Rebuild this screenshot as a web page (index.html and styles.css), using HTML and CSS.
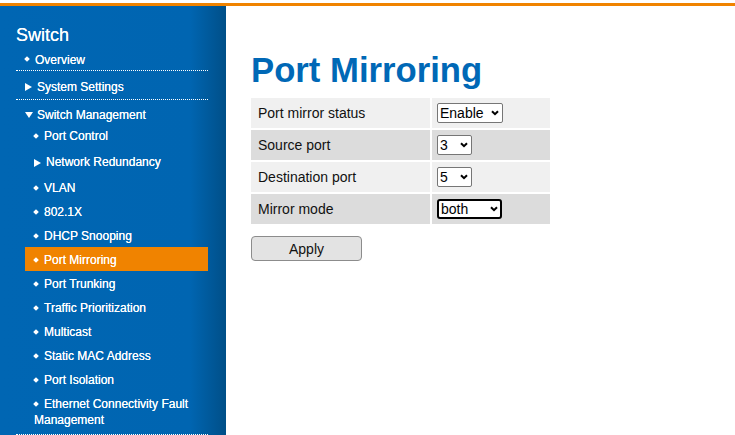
FILE: index.html
```html
<!DOCTYPE html>
<html>
<head>
<meta charset="utf-8">
<title>Port Mirroring</title>
<link rel="stylesheet" href="styles.css">
</head>
<body>
<div class="topbar"></div>
<div class="layout">
  <nav class="sidebar">
    <div class="brand">Switch</div>
    <ul class="menu">
      <li class="item"><div class="row r-overview"><span class="dot"></span>Overview</div></li>
      <li class="item"><div class="row r-system"><span class="tri-r"></span>System Settings</div></li>
      <li class="item">
        <div class="row r-mgmt"><span class="tri-d"></span>Switch Management</div>
        <ul class="sub">
          <li class="sub-item"><span class="dot"></span>Port Control</li>
          <li class="sub-item nr"><span class="tri-r"></span>Network Redundancy</li>
          <li class="sub-item"><span class="dot"></span>VLAN</li>
          <li class="sub-item"><span class="dot"></span>802.1X</li>
          <li class="sub-item"><span class="dot"></span>DHCP Snooping</li>
          <li class="sub-item active"><span class="dot"></span>Port Mirroring</li>
          <li class="sub-item"><span class="dot"></span>Port Trunking</li>
          <li class="sub-item"><span class="dot"></span>Traffic Prioritization</li>
          <li class="sub-item"><span class="dot"></span>Multicast</li>
          <li class="sub-item"><span class="dot"></span>Static MAC Address</li>
          <li class="sub-item"><span class="dot"></span>Port Isolation</li>
          <li class="sub-item"><span class="dot"></span>Ethernet Connectivity Fault Management</li>
        </ul>
      </li>
    </ul>
  </nav>
  <main class="content">
    <h1 class="title">Port Mirroring</h1>
    <table class="form">
      <tr class="light">
        <td class="label">Port mirror status</td>
        <td class="val"><span class="sel w-enable"><select><option>Enable</option><option>Disable</option></select><svg class="chev" width="8" height="6" viewBox="0 0 8 6"><path d="M1 1.2L4 4.2L7 1.2" fill="none" stroke="#000" stroke-width="2"/></svg></span></td>
      </tr>
      <tr class="dark">
        <td class="label">Source port</td>
        <td class="val"><span class="sel w-num"><select><option>3</option></select><svg class="chev" width="8" height="6" viewBox="0 0 8 6"><path d="M1 1.2L4 4.2L7 1.2" fill="none" stroke="#000" stroke-width="2"/></svg></span></td>
      </tr>
      <tr class="light">
        <td class="label">Destination port</td>
        <td class="val"><span class="sel w-num"><select><option>5</option></select><svg class="chev" width="8" height="6" viewBox="0 0 8 6"><path d="M1 1.2L4 4.2L7 1.2" fill="none" stroke="#000" stroke-width="2"/></svg></span></td>
      </tr>
      <tr class="dark">
        <td class="label">Mirror mode</td>
        <td class="val"><span class="sel w-mode"><select class="focused"><option>both</option></select><svg class="chev" width="8" height="6" viewBox="0 0 8 6"><path d="M1 1.2L4 4.2L7 1.2" fill="none" stroke="#000" stroke-width="2"/></svg></span></td>
      </tr>
    </table>
    <button class="apply">Apply</button>
  </main>
</div>
</body>
</html>
```

FILE: styles.css
```css
html, body {
  margin: 0;
  padding: 0;
  background: #fff;
}
body {
  font-family: "Liberation Sans", Arial, sans-serif;
  overflow: hidden;
}
.topbar {
  margin-top: 3px;
  height: 3px;
  background: #f08300;
}
.layout {
  display: flex;
  align-items: flex-start;
}
.sidebar {
  width: 226px;
  min-height: 440px;
  box-sizing: border-box;
  padding-top: 18px;
  color: #fff;
  background: linear-gradient(to right, #0066b3 0, #0065b1 190px, #004f88 226px);
}
.brand {
  padding-left: 16px;
  font-size: 18px;
  line-height: 22px;
  margin-bottom: 1px;
  text-shadow: 0 0 0.4px #fff;
}
.menu {
  list-style: none;
  margin: 0 18px 0 16px;
  padding: 0;
}
.item {
  border-bottom: 1px dotted #fff;
  font-size: 12px;
  line-height: 16px;
  text-shadow: 0 0 0.4px #fff;
}
.row {
  display: flex;
  align-items: center;
  padding-left: 9px;
}
.r-overview { padding-top: 5px; padding-bottom: 2px; }
.r-system { padding-top: 8px; padding-bottom: 4px; }
.r-mgmt { padding-top: 7px; padding-bottom: 0; }
.sub {
  list-style: none;
  margin: 0 0 0 9px;
  padding: 0 0 3px 0;
}
.sub-item {
  padding: 5px 0 3px 9px;
}
.sub-item.nr {
  padding-top: 7px;
  padding-bottom: 5px;
}
.sub-item.active {
  background: #f08300;
}
.dot {
  display: inline-block;
  width: 4px;
  height: 4px;
  background: #fff;
  transform: rotate(45deg);
  margin-right: 6px;
  vertical-align: middle;
  position: relative;
  top: -1px;
}
.tri-r {
  display: inline-block;
  width: 0;
  height: 0;
  border-left: 7px solid #fff;
  border-top: 4px solid transparent;
  border-bottom: 4px solid transparent;
  margin-right: 5px;
  vertical-align: middle;
}
.tri-d {
  display: inline-block;
  width: 0;
  height: 0;
  border-top: 6px solid #fff;
  border-left: 4px solid transparent;
  border-right: 4px solid transparent;
  margin-right: 4px;
}
.content {
  padding-left: 25px;
}
.title {
  margin: 44px 0 0 0;
  font-size: 34.7px;
  line-height: 40px;
  font-weight: bold;
  color: #0068b6;
}
.form {
  border-collapse: separate;
  border-spacing: 2px;
  margin: 6px 0 0 -2px;
  font-size: 14px;
  color: #111;
}
.form td {
  height: 30px;
  padding: 0;
  box-sizing: border-box;
}
.form .label {
  width: 179px;
  padding-left: 7px;
}
.form .val {
  width: 118px;
  padding-left: 5px;
}
.light td { background: #f0f0f0; }
.dark td { background: #dcdcdc; }
.sel {
  position: relative;
  display: inline-block;
  vertical-align: middle;
}
.sel select {
  appearance: none;
  -webkit-appearance: none;
  display: block;
  box-sizing: border-box;
  height: 20px;
  margin: 0;
  padding: 0 0 0 2px;
  font-family: "Liberation Sans", Arial, sans-serif;
  font-size: 14px;
  color: #000;
  background: #fff;
  border: 1px solid #767676;
  border-radius: 2px;
  outline: none;
}
.sel select.focused {
  border: 2px solid #000;
  border-radius: 3px;
  padding-left: 2px;
}
.w-enable select { width: 66px; }
.w-num select { width: 35px; }
.w-mode select { width: 65px; }
.chev {
  position: absolute;
  right: 4px;
  top: 7px;
  pointer-events: none;
}
.apply {
  display: block;
  margin-top: 10px;
  width: 111px;
  height: 25px;
  box-sizing: border-box;
  border: 1px solid #8c8c8c;
  border-radius: 4px;
  background: #e3e3e3;
  font-family: "Liberation Sans", Arial, sans-serif;
  font-size: 14px;
  color: #111;
  padding: 0;
}
```
